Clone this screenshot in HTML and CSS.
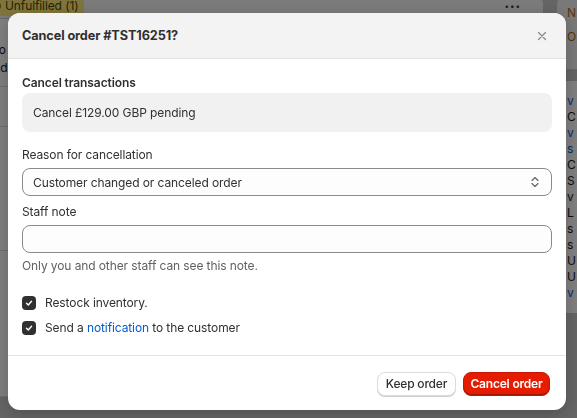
FILE: index.html
```html
<!DOCTYPE html>
<html lang="en">
<head>
<meta charset="utf-8">
<title>Cancel order</title>
<link rel="stylesheet" href="styles.css">
</head>
<body>
<div class="page">
  <div class="main">
    <div class="card">
      <div class="card-head">
        <span class="badge"><span class="badge-dot"></span>Unfulfilled (1)</span>
        <span class="dots">•••</span>
      </div>
      <div class="card-row info">
        <span>Lo</span>
        <span>Ad</span>
      </div>
      <div class="card-row item"><span class="thumb"></span></div>
      <div class="card-row tall"></div>
      <div class="card-row tall last"></div>
    </div>
  </div>
  <aside class="side">
    <div class="side-card top">
      <div class="line warn">N</div>
      <div class="line warn">O</div>
    </div>
    <div class="side-card">
      <div class="line link">v</div>
      <div class="line dark">C</div>
      <div class="line link">v</div>
      <div class="line link">s</div>
      <div class="line dark">C</div>
      <div class="line dark">S</div>
      <div class="line dark">v</div>
      <div class="line dark">L</div>
      <div class="line dark">s</div>
      <div class="line dark">s</div>
      <div class="line dark">U</div>
      <div class="line dark">U</div>
      <div class="line link">v</div>
    </div>
  </aside>
</div>

<div class="backdrop"></div>

<div class="modal-layer">
  <div class="modal" role="dialog" aria-labelledby="modal-title">
    <header class="modal-header">
      <h2 id="modal-title" class="modal-title">Cancel order #TST16251?</h2>
      <button class="close-btn" aria-label="Close">
        <svg width="10" height="10" viewBox="0 0 10 10"><path d="M1.5 1.5L8.5 8.5M8.5 1.5L1.5 8.5" stroke="#8a8a8a" stroke-width="1.3" stroke-linecap="round"/></svg>
      </button>
    </header>
    <div class="modal-body">
      <h3 class="section-title">Cancel transactions</h3>
      <div class="txn-box">Cancel £129.00 GBP pending</div>

      <div class="field reason">
        <label class="field-label">Reason for cancellation</label>
        <div class="select">
          <span>Customer changed or canceled order</span>
          <svg class="chev" width="8" height="12" viewBox="0 0 8 12"><path d="M1 4.5L4 1.5L7 4.5M1 7.5L4 10.5L7 7.5" fill="none" stroke="#616161" stroke-width="1.1" stroke-linecap="round" stroke-linejoin="round"/></svg>
        </div>
      </div>

      <div class="field staff">
        <label class="field-label">Staff note</label>
        <div class="input"></div>
        <p class="help">Only you and other staff can see this note.</p>
      </div>

      <div class="checks">
        <label class="check-row"><span class="checkbox"><svg width="10" height="10" viewBox="0 0 10 10"><path d="M2.5 5.2L4.3 7L7.5 3.3" fill="none" stroke="#fff" stroke-width="1.4" stroke-linecap="round" stroke-linejoin="round"/></svg></span>Restock inventory.</label>
        <label class="check-row"><span class="checkbox"><svg width="10" height="10" viewBox="0 0 10 10"><path d="M2.5 5.2L4.3 7L7.5 3.3" fill="none" stroke="#fff" stroke-width="1.4" stroke-linecap="round" stroke-linejoin="round"/></svg></span>Send a&nbsp;<a class="link" href="#">notification</a>&nbsp;to the customer</label>
      </div>
    </div>
    <footer class="modal-footer">
      <button class="btn btn-secondary">Keep order</button>
      <button class="btn btn-danger">Cancel order</button>
    </footer>
  </div>
</div>
</body>
</html>
```

FILE: styles.css
```css
* { box-sizing: border-box; }

html, body {
  margin: 0;
  padding: 0;
  height: 100%;
  overflow: hidden;
}

body {
  background: #cacaca;
  font-family: Inter, "Noto Sans", sans-serif;
  font-size: 12px;
  letter-spacing: -0.1px;
  color: #303030;
}

/* ---------- background page ---------- */
.page {
  display: flex;
  gap: 14px;
  margin-top: -7px;
  margin-left: -120px;
}

.main {
  width: 663px;
  flex-shrink: 0;
}

.card {
  background: #f0f0f0;
  border-radius: 12px;
  overflow: hidden;
}

.card-head {
  display: flex;
  align-items: center;
  justify-content: space-between;
  height: 26px;
  padding: 0 22px 0 103px;
  background: #f6f6f6;
  border-bottom: 1px solid #d0d0d0;
}

.badge {
  display: inline-flex;
  align-items: center;
  gap: 4px;
  height: 20px;
  padding: 0 6px 0 8px;
  background: #ffeb78;
  border-radius: 6px;
  color: #4f4700;
  font-size: 12px;
}

.badge-dot {
  width: 10px;
  height: 10px;
  border-radius: 50%;
  border: 2px solid #8a7a00;
}

.dots {
  color: #3a3a3a;
  font-size: 8px;
  letter-spacing: 1px;
}

.card-row {
  padding: 0 0 0 112px;
  display: flex;
  border-bottom: 1px solid #dcdcdc;
  background: #fff;
  color: #1a1a1a;
}

.card-row.info {
  height: 68px;
  padding-top: 22px;
  flex-direction: column;
  line-height: 18px;
}

.card-row.item { height: 40px; align-items: center; }

.thumb {
  width: 40px;
  height: 30px;
  border-radius: 6px;
  background: linear-gradient(#f4f4f4 25%, #3a3028 25%, #2a2520 55%, #f4f4f4 55%);
  margin-left: -32px;
}

.card-row.tall { height: 124px; }
.card-row.tall.last { height: 146px; }

.side {
  flex: 1;
  display: flex;
  flex-direction: column;
  gap: 12px;
}

.side-card {
  background: #fff;
  border-radius: 12px 0 0 12px;
  padding: 12px 10px;
  display: flex;
  flex-direction: column;
}

.side-card.top { height: 76px; background: #f3f3f3; gap: 8px; }

.line {
  height: 16px;
  font-size: 12px;
  line-height: 16px;
}

.line.dark { color: #1a1a1a; }
.line.link { color: #005bd3; }
.line.warn { color: #b06a00; }

.backdrop {
  position: fixed;
  inset: 0;
  background: rgba(0, 0, 0, 0.5);
}

/* ---------- modal ---------- */
.modal-layer {
  position: fixed;
  inset: 0;
  display: flex;
  align-items: flex-start;
  padding: 13px 11px 0 8px;
}

.modal {
  width: 558px;
  background: #ffffff;
  border-radius: 12px;
  overflow: hidden;
  box-shadow: 0 4px 16px rgba(0, 0, 0, 0.2);
}

.modal-header {
  display: flex;
  align-items: center;
  justify-content: space-between;
  height: 46px;
  padding: 0 14px;
  background: #f3f3f3;
  border-bottom: 1px solid #e1e1e1;
}

.modal-title {
  margin: 0;
  font-size: 12.7px;
  font-weight: 650;
  letter-spacing: -0.1px;
  color: #303030;
  line-height: 20px;
}

.close-btn {
  border: 0;
  background: none;
  padding: 0;
  width: 20px;
  height: 20px;
  display: flex;
  align-items: center;
  justify-content: center;
  cursor: pointer;
}

.modal-body {
  padding: 14px 14px 17px;
  display: flex;
  flex-direction: column;
}

.section-title {
  margin: 0;
  font-size: 12px;
  font-weight: 600;
  line-height: 20px;
}

.txn-box {
  background: #f1f1f1;
  border-radius: 8px;
  padding: 10px 11px 9px;
  line-height: 20px;
}

.field { display: flex; flex-direction: column; }
.field.reason { margin-top: 13px; }
.field.staff { margin-top: 6px; }

.field-label {
  line-height: 20px;
  margin-bottom: 3px;
}

.select, .input {
  height: 28px;
  border: 1px solid #8a8a8a;
  border-radius: 8px;
  background: #fdfdfd;
}

.select {
  display: flex;
  align-items: center;
  justify-content: space-between;
  padding: 0 12px 0 10px;
}

.chev { display: block; }

.help {
  margin: 3px 0 0;
  line-height: 20px;
  color: #616161;
}

.checks {
  margin-top: 17px;
  display: flex;
  flex-direction: column;
  gap: 5px;
}

.check-row {
  display: flex;
  align-items: center;
  line-height: 20px;
}

.checkbox {
  width: 14px;
  height: 14px;
  border-radius: 4px;
  background: #303030;
  display: inline-flex;
  align-items: center;
  justify-content: center;
  margin-right: 9px;
  flex-shrink: 0;
}

.link {
  color: #005bd3;
  text-decoration: none;
}

.modal-footer {
  display: flex;
  justify-content: flex-end;
  gap: 7px;
  padding: 16px 16px 14px;
  border-top: 1px solid #e3e3e3;
}

.btn {
  height: 24px;
  padding: 0;
  border-radius: 8px;
  font-family: inherit;
  font-size: 12px;
  letter-spacing: -0.2px;
  line-height: 20px;
  text-align: center;
}

.btn-secondary {
  width: 79px;
  background: #ffffff;
  color: #303030;
  border: 1px solid #dcdcdc;
  box-shadow: 0 1px 0 #cfcfcf;
  font-weight: 500;
}

.btn-danger {
  width: 87px;
  background: #e51c00;
  color: #ffffff;
  border: 1px solid #c41800;
  box-shadow: inset 0 -1px 0 #a01400;
  font-weight: 600;
}
```
